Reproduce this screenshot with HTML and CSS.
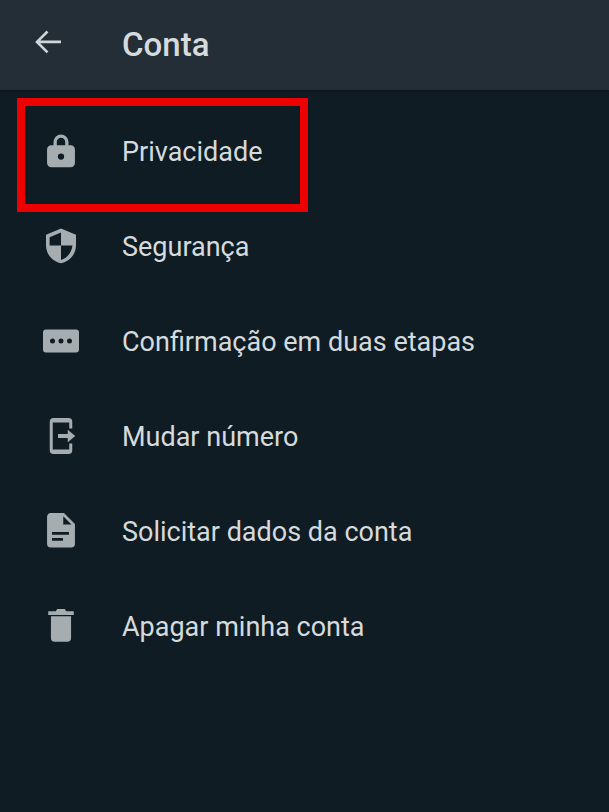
FILE: index.html
```html
<!DOCTYPE html>
<html lang="pt-BR">
<head>
  <meta charset="UTF-8" />
  <title>Conta</title>
  <link rel="stylesheet" href="styles.css">
</head>
<body>
  <header class="top-bar">
    <svg class="back-icon" viewBox="0 0 32 32"><path d="M29 15.900H6M15.500 5.500 5 15.900l10.500 10.400" fill="none" stroke="currentColor" stroke-width="2.600"/></svg>
    <h1>Conta</h1>
  </header>

  <ul class="menu">
    <li class="menu-item selected">
      <svg class="icon" viewBox="0 0 24 24"><path fill-rule="evenodd" d="M18.500 8.200H17V6A5 5 0 0 0 7 6v2.200H5.500a2.800 2.800 0 0 0-2.800 2.800v9a2.800 2.800 0 0 0 2.800 2.800h13a2.800 2.800 0 0 0 2.800-2.800v-9a2.800 2.800 0 0 0-2.800-2.800ZM9.200 6a2.800 2.800 0 0 1 5.600 0v2.200H9.200ZM12 17.800a2.100 2.100 0 1 1 0-4.200 2.100 2.100 0 0 1 0 4.200Z"/></svg>
      <span>Privacidade</span>
    </li>
    <li class="menu-item">
      <svg class="icon" viewBox="0 0 24 24"><path fill-rule="evenodd" d="M12 .3 2 4.500v7c0 6 4.300 10.800 10 12 5.700-1.200 10-6 10-12v-7ZM12 3 4.400 6.100v5.600H12ZM12 11.700v9.700c4.100-1.500 7.200-4.900 7.600-9.700Z"/></svg>
      <span>Segurança</span>
    </li>
    <li class="menu-item">
      <svg class="icon" viewBox="0 0 36 24"><path fill-rule="evenodd" d="M3 .5h30a3 3 0 0 1 3 3v17a3 3 0 0 1-3 3H3a3 3 0 0 1-3-3v-17a3 3 0 0 1 3-3ZM9.500 9.500a2.500 2.500 0 1 0 0 5 2.500 2.500 0 0 0 0-5Zm8.500 0a2.500 2.500 0 1 0 0 5 2.500 2.500 0 0 0 0-5Zm8.500 0a2.500 2.500 0 1 0 0 5 2.500 2.500 0 0 0 0-5Z"/></svg>
      <span>Confirmação em duas etapas</span>
    </li>
    <li class="menu-item">
      <svg class="icon" viewBox="0 0 24 24"><path d="M7 0h10a2.500 2.500 0 0 1 2.500 2.500V7h-2V3H6.500v18h11v-4h2v4.500A2.500 2.500 0 0 1 17 24H7a2.500 2.500 0 0 1-2.500-2.500v-19A2.500 2.500 0 0 1 7 0ZM10 10.700h6.500V7.800l5 4.200-5 4.200v-2.900H10Z"/></svg>
      <span>Mudar número</span>
    </li>
    <li class="menu-item">
      <svg class="icon" viewBox="0 0 24 24"><path fill-rule="evenodd" d="M5.500 0H14l7.300 7.300v13.200a2.500 2.500 0 0 1-2.500 2.500H5.200a2.500 2.500 0 0 1-2.500-2.500v-18A2.500 2.500 0 0 1 5.500 0ZM13.500 2.200v5.500H19ZM6 12.700v1.800h11.300v-1.800ZM6 16.700v1.800h7.300v-1.800Z"/></svg>
      <span>Solicitar dados da conta</span>
    </li>
    <li class="menu-item">
      <svg class="icon" viewBox="0 0 24 24"><path d="M9.500.7h5l1 1.500h5v2.500h-17V2.200h5ZM5.300 5.500h13.400V20a2.500 2.500 0 0 1-2.500 2.500H7.800A2.500 2.500 0 0 1 5.300 20Z"/></svg>
      <span>Apagar minha conta</span>
    </li>
  </ul>
</body>
</html>
```

FILE: styles.css
```css
body {
  margin: 0;
  height: 812px;
  overflow: hidden;
  background-color: #101c24;
  color: #d5dadd;
  font-family: Roboto, "Noto Sans", sans-serif;
}

.top-bar {
  display: flex;
  align-items: center;
  height: 90px;
  padding-left: 32px;
  box-sizing: border-box;
  background-color: #232e36;
  box-shadow: 0 2px 3px rgba(0, 0, 0, 0.25);
}

.back-icon {
  width: 32px;
  height: 32px;
  margin-top: -7px;
  color: #d0d5d8;
}

.top-bar h1 {
  margin: -2px 0 0 58px;
  font-size: 33px;
  font-weight: 500;
  color: #d5dadd;
}

.menu {
  list-style: none;
  margin: 13px 0 0;
  padding: 0;
}

.menu-item {
  display: flex;
  align-items: center;
  height: 95px;
  font-size: 27px;
  position: relative;
}

.menu-item span {
  padding-top: 2px;
}

.icon {
  width: 36px;
  height: 36px;
  margin-left: 43px;
  margin-right: 43px;
  flex: none;
  fill: #a5adb1;
}

.selected::after {
  content: "";
  position: absolute;
  left: 17px;
  top: -5px;
  width: 291px;
  height: 114px;
  box-sizing: border-box;
  border: 8px solid #ec0000;
}
```
